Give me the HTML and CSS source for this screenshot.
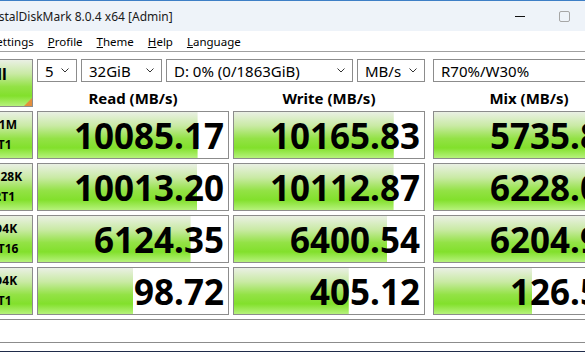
FILE: index.html
```html
<!DOCTYPE html>
<html lang="en">
<head>
    <meta charset="UTF-8">
    <meta name="viewport" content="width=device-width, initial-scale=1.0">
    <title>CrystalDiskMark 8.0.4 x64 [Admin]</title>
    <link rel="stylesheet" href="styles.css">
</head>
<body>
    <div class="window">
        <div class="titlebar">
            <span class="title">CrystalDiskMark 8.0.4 x64 [Admin]</span>
            <div class="controls">
                <span class="ctl"><svg width="10" height="10" viewBox="0 0 10 10"><line x1="0" y1="5.5" x2="10" y2="5.5" stroke="#111" stroke-width="1"/></svg></span>
                <span class="ctl"><svg width="11" height="11" viewBox="0 0 11 11"><rect x="0.5" y="0.5" width="10" height="10" rx="1.5" fill="none" stroke="#a6a6a6" stroke-width="1"/></svg></span>
                <span class="ctl"><svg width="10" height="10" viewBox="0 0 10 10"><path d="M0 0L10 10M10 0L0 10" stroke="#111" stroke-width="1"/></svg></span>
            </div>
        </div>

        <div class="menubar">
            <span><u>S</u>ettings</span>
            <span><u>P</u>rofile</span>
            <span><u>T</u>heme</span>
            <span><u>H</u>elp</span>
            <span><u>L</u>anguage</span>
        </div>

        <div class="main">
            <div class="all-btn">All</div>

            <div class="combos">
                <div class="combo w-count">5<svg class="chev" width="8" height="5" viewBox="0 0 8 5"><polyline points="0.5,0.5 4,4 7.5,0.5" fill="none" stroke="#333" stroke-width="1"/></svg></div>
                <div class="combo w-size">32GiB<svg class="chev" width="8" height="5" viewBox="0 0 8 5"><polyline points="0.5,0.5 4,4 7.5,0.5" fill="none" stroke="#333" stroke-width="1"/></svg></div>
                <div class="combo w-drive">D: 0% (0/1863GiB)<svg class="chev" width="8" height="5" viewBox="0 0 8 5"><polyline points="0.5,0.5 4,4 7.5,0.5" fill="none" stroke="#333" stroke-width="1"/></svg></div>
                <div class="combo w-unit">MB/s<svg class="chev" width="8" height="5" viewBox="0 0 8 5"><polyline points="0.5,0.5 4,4 7.5,0.5" fill="none" stroke="#333" stroke-width="1"/></svg></div>
            </div>
            <div class="combo mix">R70%/W30%<svg class="chev" width="8" height="5" viewBox="0 0 8 5"><polyline points="0.5,0.5 4,4 7.5,0.5" fill="none" stroke="#333" stroke-width="1"/></svg></div>

            <div class="head">Read (MB/s)</div>
            <div class="head">Write (MB/s)</div>
            <div class="head mix">Mix (MB/s)</div>

            <div class="label">SEQ1M<br>Q8T1</div>
            <div class="cell" style="--fill: 84.0%">10085.17</div>
            <div class="cell" style="--fill: 84.1%">10165.83</div>
            <div class="cell mix" style="--fill: 79.8%">5735.85</div>

            <div class="label">SEQ128K<br>Q32T1</div>
            <div class="cell" style="--fill: 83.9%">10013.20</div>
            <div class="cell" style="--fill: 84.0%">10112.87</div>
            <div class="cell mix" style="--fill: 80.4%">6228.03</div>

            <div class="label">RND4K<br>Q32T16</div>
            <div class="cell" style="--fill: 80.3%">6124.35</div>
            <div class="cell" style="--fill: 80.6%">6400.54</div>
            <div class="cell mix" style="--fill: 80.3%">6204.91</div>

            <div class="label">RND4K<br>Q1T1</div>
            <div class="cell" style="--fill: 50.0%">98.72</div>
            <div class="cell" style="--fill: 60.4%">405.12</div>
            <div class="cell mix" style="--fill: 51.8%">126.54</div>
        </div>

        <div class="comment"></div>
    </div>
</body>
</html>
```

FILE: styles.css
```css
* {
    box-sizing: border-box;
}
body {
    margin: 0;
    width: 585px;
    height: 352px;
    overflow: hidden;
    background: #1f2b4a;
    font-family: "Noto Sans", "Segoe UI", sans-serif;
    color: #000;
}
.window {
    width: 672px;
    height: 351px;
    margin-left: -40px;
    background: #fff;
}
.titlebar {
    height: 31px;
    background: #eef3f9;
    border-top: 1px solid #3d7fc6;
    display: flex;
    align-items: center;
    font-size: 12px;
}
.title {
    padding-left: 20px;
    color: #1a1a1a;
}
.controls {
    margin-left: auto;
    display: flex;
    height: 100%;
}
.ctl {
    width: 45px;
    flex: none;
    display: flex;
    align-items: center;
    justify-content: center;
}
.menubar {
    height: 21px;
    border-bottom: 1px solid #a0a0a0;
    display: flex;
    align-items: center;
    font-size: 11.5px;
    padding-left: 23px;
}
.menubar span {
    padding: 0 7px;
}
.main {
    display: grid;
    grid-template-columns: 73px 192px 192px 196px;
    grid-template-rows: 23px 21px repeat(4, 48px);
    gap: 4px;
    padding-top: 7px;
}
.mix {
    margin-left: 4px;
}
.all-btn {
    grid-row: 1 / 3;
    position: relative;
    border: 1px solid #8c8c8c;
    background: linear-gradient(to bottom, #eaf0e4 0%, #c9eaa4 30%, #93e245 58%, #82e02c 78%, #b6f27c 100%);
    font-size: 16px;
    font-weight: bold;
    text-align: center;
    padding-top: 3px;
}
.all-btn::after {
    content: "";
    position: absolute;
    right: 0;
    bottom: 0;
    border-left: 8px solid transparent;
    border-bottom: 8px solid #e48f3c;
}
.combos {
    grid-column: 2 / 4;
    display: flex;
    gap: 4px;
}
.combo {
    border: 1px solid #8c8c8c;
    background: #fff;
    display: flex;
    align-items: center;
    font-size: 15px;
    padding: 0 7px;
}
.combo .chev {
    margin-left: auto;
}
.w-count { width: 40px; }
.w-size { width: 81px; }
.w-drive { width: 187px; }
.w-unit { width: 68px; }
.head {
    display: flex;
    align-items: flex-end;
    justify-content: center;
    font-size: 15px;
    font-weight: bold;
    line-height: 17px;
}
.label {
    border: 1px solid #8c8c8c;
    background: linear-gradient(to bottom, #eaf0e4 0%, #c9eaa4 30%, #93e245 58%, #82e02c 78%, #b6f27c 100%);
    font-size: 12px;
    font-weight: bold;
    line-height: 20px;
    text-align: center;
    padding-top: 3px;
}
.cell {
    border: 1px solid #8c8c8c;
    background-color: #fff;
    background-image: linear-gradient(to bottom, #eaf0e4 0%, #c9eaa4 30%, #93e245 58%, #82e02c 78%, #b6f27c 100%);
    background-size: var(--fill) 100%;
    background-repeat: no-repeat;
    display: flex;
    align-items: center;
    justify-content: flex-end;
    padding-right: 4px;
    font-size: 35px;
    font-weight: bold;
    line-height: 1;
}
.comment {
    width: 665px;
    height: 24px;
    margin-top: 4px;
    border-top: 1px solid #8c8c8c;
    border-bottom: 1px solid #8c8c8c;
}
```
